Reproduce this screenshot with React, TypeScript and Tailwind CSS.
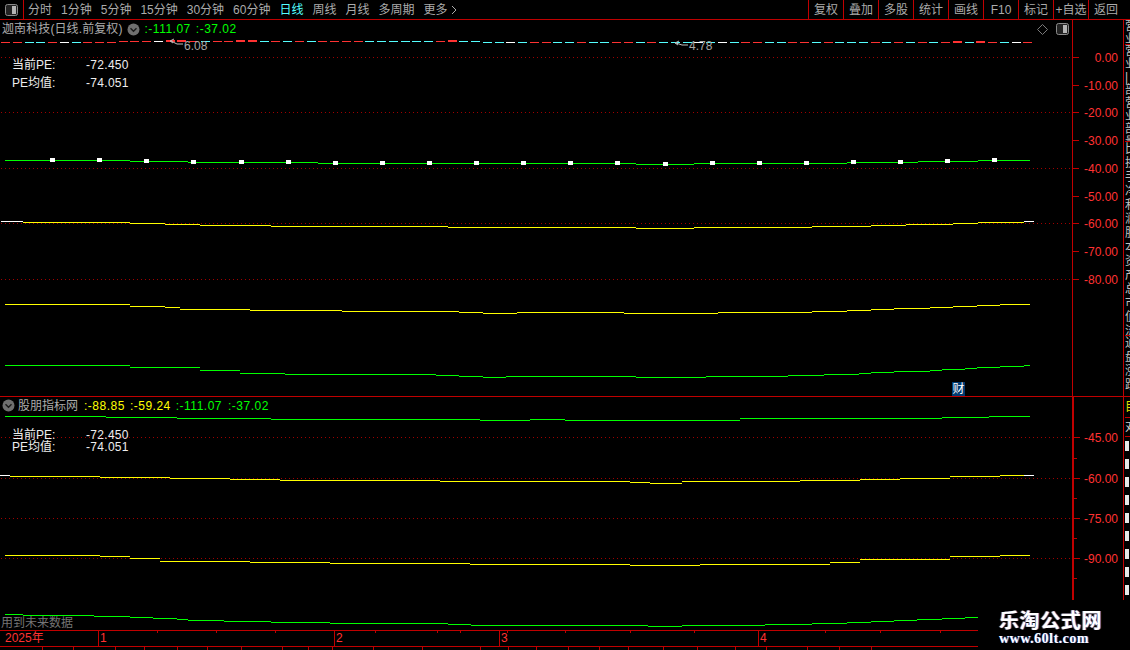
import React from 'react';

type Seg = [number, number, number];

const toolLeft = ['分时', '1分钟', '5分钟', '15分钟', '30分钟', '60分钟', '日线', '周线', '月线', '多周期', '更多'];
const toolRight = ['复权', '叠加', '多股', '统计', '画线', 'F10', '标记', '+自选', '返回'];

// price pane, y values are page coordinates
const topGreen: Seg[] = [[5, 130, 160], [130, 188, 161], [188, 318, 162], [318, 636, 163], [636, 694, 164], [694, 847, 163], [847, 918, 162], [918, 978, 161], [978, 1030, 160]];
const topYellow: Seg[] = [[23, 130, 222], [130, 165, 223], [165, 200, 224], [200, 271, 225], [271, 448, 226], [448, 636, 227], [636, 694, 228], [694, 812, 227], [812, 871, 226], [871, 906, 225], [906, 953, 224], [953, 978, 223], [978, 1024, 222]];
const topWhite: Seg[] = [[1, 23, 221], [1024, 1034, 221]];
const topYellow2: Seg[] = [[5, 130, 304], [130, 165, 306], [165, 180, 307], [180, 250, 309], [250, 342, 310], [342, 459, 311], [459, 483, 312], [483, 517, 313], [517, 624, 312], [624, 718, 313], [718, 812, 312], [812, 847, 311], [847, 871, 310], [871, 894, 309], [894, 930, 308], [930, 953, 307], [953, 977, 306], [977, 1000, 305], [1000, 1030, 304]];
const topGreen2: Seg[] = [[5, 130, 365], [130, 200, 367], [200, 240, 370], [240, 285, 373], [285, 436, 374], [436, 459, 375], [459, 483, 376], [483, 506, 377], [506, 636, 376], [636, 706, 377], [706, 788, 376], [788, 824, 375], [824, 859, 374], [859, 871, 373], [871, 894, 372], [894, 930, 371], [930, 942, 370], [942, 965, 369], [965, 977, 368], [977, 1000, 367], [1000, 1024, 366], [1024, 1030, 365]];

// indicator pane
const subGreen: Seg[] = [[5, 106, 416], [106, 177, 417], [177, 271, 418], [271, 480, 419], [480, 530, 420], [530, 565, 419], [565, 740, 420], [740, 942, 418], [942, 989, 417], [989, 1030, 416]];
const subYellow: Seg[] = [[10, 100, 476], [100, 170, 477], [170, 230, 478], [230, 280, 479], [280, 440, 480], [440, 630, 481], [630, 650, 482], [650, 682, 483], [682, 800, 481], [800, 860, 480], [860, 900, 479], [900, 950, 478], [950, 1000, 476], [1000, 1024, 475]];
const subWhite: Seg[] = [[0, 10, 475], [1024, 1034, 475]];
const subYellow2: Seg[] = [[5, 100, 555], [100, 130, 556], [130, 160, 558], [160, 250, 561], [250, 330, 562], [330, 470, 563], [470, 630, 564], [630, 700, 565], [700, 830, 564], [830, 860, 562], [860, 950, 559], [950, 1000, 556], [1000, 1030, 555]];
const subGreen2: Seg[] = [[5, 23, 614], [23, 94, 615], [94, 130, 616], [130, 153, 617], [153, 177, 618], [177, 188, 619], [188, 224, 620], [224, 271, 621], [271, 330, 622], [330, 448, 623], [448, 471, 624], [471, 648, 625], [648, 682, 626], [682, 765, 625], [765, 812, 624], [812, 847, 623], [847, 871, 622], [871, 894, 621], [894, 917, 620], [917, 942, 619], [942, 965, 618], [965, 978, 617]];

const squares = [52, 99, 146, 193, 241, 288, 335, 382, 429, 476, 523, 570, 617, 665, 712, 759, 806, 853, 900, 947, 994];

// r red, R thick red, c cyan, w white
const dashCodes = 'rrccrwcrrrrrrwRRrcrrRRcrcrcrrrrccccccrRccccwcrrccrccrrcrcccwcwcrrccrrcrcccrcrcrcrRcRrcwr';
const dashColor: Record<string, string> = { r: '#ff3232', R: '#ff3232', c: '#54ffff', w: '#ffffff' };

const topAxis = [
  { y: 57, label: '0.00' }, { y: 85, label: '-10.00' }, { y: 112, label: '-20.00' }, { y: 140, label: '-30.00' },
  { y: 168, label: '-40.00' }, { y: 196, label: '-50.00' }, { y: 223, label: '-60.00' }, { y: 251, label: '-70.00' }, { y: 279, label: '-80.00' },
];
const subAxis = [
  { y: 437, label: '-45.00' }, { y: 478, label: '-60.00' }, { y: 518, label: '-75.00' }, { y: 558, label: '-90.00' },
];
const subMinor = [458, 498, 538, 578];

const topMinorTicks = [157, 216, 275, 375, 437, 460, 507, 565, 630, 694, 825, 880, 940];
const bottomTicks = [42, 73, 115, 144, 177, 207, 241, 282, 308, 332, 373, 422, 480, 508, 536, 568, 599, 628, 663, 697, 735, 766, 807, 839, 871];
const months = [{ x: 98, label: '1' }, { x: 334, label: '2' }, { x: 499, label: '3' }, { x: 758, label: '4' }];

const Steps = ({ segs, color }: { segs: Seg[]; color: string }) => (
  <path d={segs.map(([a, b, y]) => `M${a} ${y + 0.5}H${b}`).join('')} stroke={color} strokeWidth={1} fill="none" shapeRendering="crispEdges" />
);

const Grid = ({ ys }: { ys: number[] }) => (
  <>
    {ys.map((y) => (
      <line key={y} x1={1} x2={1072} y1={y + 0.5} y2={y + 0.5} stroke="#a00000" strokeDasharray="1 3" shapeRendering="crispEdges" />
    ))}
  </>
);

const Chevron = () => (
  <svg width="13" height="13" viewBox="0 0 13 13" className="shrink-0">
    <circle cx="6.5" cy="6.5" r="6" fill="#6f6f6f" />
    <path d="M3.5 5.2 L6.5 8.2 L9.5 5.2" stroke="#1a1a1a" strokeWidth="1.4" fill="none" />
  </svg>
);

const PanelIcon = () => (
  <svg width="13" height="12" viewBox="0 0 13 12">
    <rect x="0.5" y="0.5" width="12" height="11" rx="2" fill="#222" stroke="#8a8a8a" />
    <rect x="2" y="2" width="4" height="8" fill="#222" />
    <rect x="7" y="2" width="4" height="8" fill="#b4b4b4" />
  </svg>
);

const Axis = ({ ticks, minor }: { ticks: { y: number; label: string }[]; minor: number[] }) => {
  return (
    <>
      {ticks.map((t) => (
        <React.Fragment key={t.label + t.y}>
          <div className="absolute left-0 w-[6px] h-px bg-[#c00000]" style={{ top: t.y }} />
          <div className="absolute right-[5px] text-[12px] leading-[14px] text-[#ff3232]" style={{ top: t.y - 6 }}>{t.label}</div>
        </React.Fragment>
      ))}
      {minor.map((y) => (
        <div key={y} className="absolute left-0 w-[3px] h-px bg-[#c00000]" style={{ top: y }} />
      ))}
    </>
  );
};

const stripTop = ['营', '业', '|', '部', '营', '业', '部', '量', '比', '换', '手', '净', '利', '润', '股', '本', '资', '产', '总', '市', '值', '流', '通', '盘', '涨', '跌', '幅', '振'];

const App: React.FC = () => {
  return (
    <div className="w-[1130px] h-[650px] relative overflow-hidden bg-black flex flex-col text-[12px] text-[#ababab] font-['Liberation_Sans','Noto_Sans_CJK_SC',sans-serif]">
      {/* Toolbar */}
      <div className="h-[20px] shrink-0 flex items-stretch justify-between border-b border-[#c00000]">
        <div className="flex items-center">
          <div className="w-[24px] h-full flex items-center justify-center border-r border-[#c00000]">
            <PanelIcon />
          </div>
          <div className="flex items-center gap-[9px] pl-[4px]">
            {toolLeft.map((t) => (
              <span key={t} className={t === '日线' ? 'text-[#54ffff] whitespace-nowrap' : 'whitespace-nowrap'}>{t}</span>
            ))}
            <svg width="6" height="10" viewBox="0 0 6 10" className="-ml-[6px]">
              <path d="M1 1 L5 5 L1 9" stroke="#ababab" fill="none" />
            </svg>
          </div>
        </div>
        <div className="flex items-stretch pr-[7px]">
          {toolRight.map((t) => (
            <div key={t} className="w-[35px] border-l border-[#c00000] flex items-center justify-center whitespace-nowrap">{t}</div>
          ))}
        </div>
      </div>

      {/* Main pane */}
      <div className="h-[377px] shrink-0 flex border-b border-[#c00000]">
        <div className="w-[1072px] relative">
          <svg width="1072" height="376" viewBox="0 20 1072 376" className="absolute left-0 top-0">
            <Grid ys={[57, 112, 168, 223, 279]} />
            {dashCodes.split('').map((c, i) => {
              const x = 1 + i * 11.75;
              const y = i >= 10 && i < 41 ? 41 : 42;
              return <rect key={i} x={Math.round(x)} y={c === 'R' ? y - 1 : y} width={9} height={c === 'R' ? 2 : 1} fill={dashColor[c]} shapeRendering="crispEdges" />;
            })}
            <path d="M174 39 L170 41 L173 43 M171 41 L177 44 L183 44" stroke="#bdbdbd" fill="none" />
            <path d="M679 41 L675 43 L678 45 M676 43 L682 45 L688 45" stroke="#bdbdbd" fill="none" />
            <Steps segs={topGreen} color="#00ff00" />
            <Steps segs={topYellow} color="#ffff00" />
            <Steps segs={topWhite} color="#ffffff" />
            <Steps segs={topYellow2} color="#ffff00" />
            <Steps segs={topGreen2} color="#00ff00" />
            {squares.map((x, i) => {
              const seg = topGreen.find(([a, b]) => x >= a && x < b);
              return <rect key={i} x={x - 2} y={(seg ? seg[2] : 160) - 2} width={5} height={4} fill="#ffffff" shapeRendering="crispEdges" />;
            })}
          </svg>

          <span className="absolute left-[184px] top-[17px] text-[#a8a8a8]">6.08</span>
          <span className="absolute left-[689px] top-[17px] text-[#a8a8a8]">4.78</span>

          <div className="relative h-[18px] pl-[2px] flex items-center">
            <span className="tracking-[0.1px]">迦南科技(日线.前复权)</span>
            <span className="ml-[4px]"><Chevron /></span>
            <span className="ml-[5px] text-[#00ff00] tracking-[0.5px]">:-111.07</span>
            <span className="ml-[5px] text-[#00ff00] tracking-[0.5px]">:-37.02</span>
            <div className="ml-auto flex items-center gap-[8px] pr-[3px]">
              <svg width="11" height="11" viewBox="0 0 11 11">
                <path d="M5.5 0.5 L10.5 5.5 L5.5 10.5 L0.5 5.5 Z" stroke="#7a7a7a" fill="none" />
              </svg>
              <PanelIcon />
            </div>
          </div>

          <div className="relative mt-[20px] ml-[12px] grid grid-cols-[74px_auto] w-fit gap-y-[4px] text-[#eeeeee] leading-[14px]">
            <span>当前PE:</span><span className="tracking-[0.3px]">-72.450</span>
            <span>PE均值:</span><span className="tracking-[0.3px]">-74.051</span>
          </div>

          <div className="absolute left-[952px] top-[362px] w-[13px] h-[14px] bg-[#003a70] text-white leading-[14px] text-center">财</div>
        </div>

        <div className="w-[51px] relative border-l border-[#c00000]">
          <div className="absolute -top-[20px] left-0 right-0">
            <Axis ticks={topAxis} minor={[]} />
          </div>
        </div>

        <div className="flex-1 border-l border-[#c00000] overflow-hidden flex flex-col items-start pl-px text-[#c0c0c0]">
          <div className="h-[25px] shrink-0 w-full border-b border-[#c00000] overflow-hidden leading-[13px]">
            <div>营</div><div>业</div>
          </div>
          <div className="h-[97px] shrink-0 w-full border-b border-[#c00000] overflow-hidden leading-[13px]">
            {stripTop.slice(0, 8).map((c, i) => <div key={i}>{c}</div>)}
          </div>
          <div className="h-[194px] shrink-0 w-full border-b border-[#c00000] overflow-hidden leading-[14px]">
            {stripTop.slice(8, 22).map((c, i) => <div key={i}>{c}</div>)}
          </div>
          <div className="overflow-hidden leading-[14px]">
            {stripTop.slice(22, 26).map((c, i) => <div key={i}>{c}</div>)}
          </div>
        </div>
      </div>

      {/* Indicator pane */}
      <div className="flex-1 flex">
        <div className="w-[1072px] flex flex-col">
          <div className="h-[233px] relative">
            <svg width="1072" height="233" viewBox="0 397 1072 233" className="absolute left-0 top-0">
              <Grid ys={[437, 478, 518, 558]} />
              <Steps segs={subGreen} color="#00ff00" />
              <Steps segs={subYellow} color="#ffff00" />
              <Steps segs={subWhite} color="#ffffff" />
              <Steps segs={subYellow2} color="#ffff00" />
              <Steps segs={subGreen2} color="#00ff00" />
            </svg>

            <div className="relative h-[17px] pl-[2px] flex items-center">
              <Chevron />
              <span className="ml-[3px]">股朋指标网</span>
              <span className="ml-[6px] text-[#ffff00] tracking-[0.5px]">:-88.85</span>
              <span className="ml-[5px] text-[#ffff00] tracking-[0.5px]">:-59.24</span>
              <span className="ml-[5px] text-[#00ff00] tracking-[0.5px]">:-111.07</span>
              <span className="ml-[6px] text-[#00ff00] tracking-[0.5px]">:-37.02</span>
            </div>

            <div className="relative mt-[15px] ml-[12px] grid grid-cols-[74px_auto] w-fit leading-[12px] text-[#eeeeee]">
              <span>当前PE:</span><span className="tracking-[0.3px]">-72.450</span>
              <span>PE均值:</span><span className="tracking-[0.3px]">-74.051</span>
            </div>

            <span className="absolute left-[1px] bottom-0 text-[#757575] leading-[14px]">用到未来数据</span>
          </div>

          {/* Time row */}
          <div className="h-[17px] shrink-0 relative border-y border-[#c00000] text-[#ff3232] leading-[15px]">
            <span className="absolute left-[5px] top-0">2025年</span>
            {months.map((m) => (
              <React.Fragment key={m.label}>
                <div className="absolute top-0 bottom-0 w-px bg-[#c00000]" style={{ left: m.x }} />
                <span className="absolute top-0" style={{ left: m.x + 2 }}>{m.label}</span>
              </React.Fragment>
            ))}
            {topMinorTicks.map((x) => (
              <div key={x} className="absolute top-0 w-px h-[2px] bg-[#c00000]" style={{ left: x }} />
            ))}
          </div>
          <div className="flex-1 relative">
            {bottomTicks.map((x) => (
              <div key={x} className="absolute top-0 w-px h-[3px] bg-[#c00000]" style={{ left: x }} />
            ))}
          </div>
        </div>

        <div className="w-[51px] relative border-l-2 border-[#c00000]">
          <div className="absolute -top-[397px] left-0 right-0">
            <Axis ticks={subAxis} minor={subMinor} />
          </div>
        </div>

        <div className="flex-1 border-l border-[#c00000] overflow-hidden flex flex-col pl-px">
          <div className="h-[21px] shrink-0 border-b border-[#c00000] overflow-hidden text-[#e0e000] leading-[20px]">目</div>
          <div className="h-[19px] shrink-0 border-b border-[#c00000] overflow-hidden text-[#d0d0d0] leading-[18px]">对</div>
          <div className="flex flex-col pt-[4px]">
            {Array.from({ length: 9 }).map((_, i) => <div key={i} className="w-[4px] h-[10px] mb-[8px] bg-[#e8e8e8]" />)}
          </div>
        </div>
      </div>

      {/* Watermark */}
      <div className="absolute right-0 bottom-0 w-[152px] h-[50px] bg-black flex flex-col items-start pl-[21px] pt-[9px]">
        <span className="text-[20px] leading-[22px] font-bold tracking-[0.6px] text-white [text-shadow:1px_0_#3a55b0,-1px_0_#a06030] font-['Noto_Sans_CJK_SC',sans-serif]">乐淘公式网</span>
        <span className="text-[14px] leading-[16px] font-bold tracking-[0.5px] text-white [text-shadow:1px_0_#3a55b0] font-['Liberation_Serif',serif]">www.60lt.com</span>
      </div>
    </div>
  );
};

export default App;
